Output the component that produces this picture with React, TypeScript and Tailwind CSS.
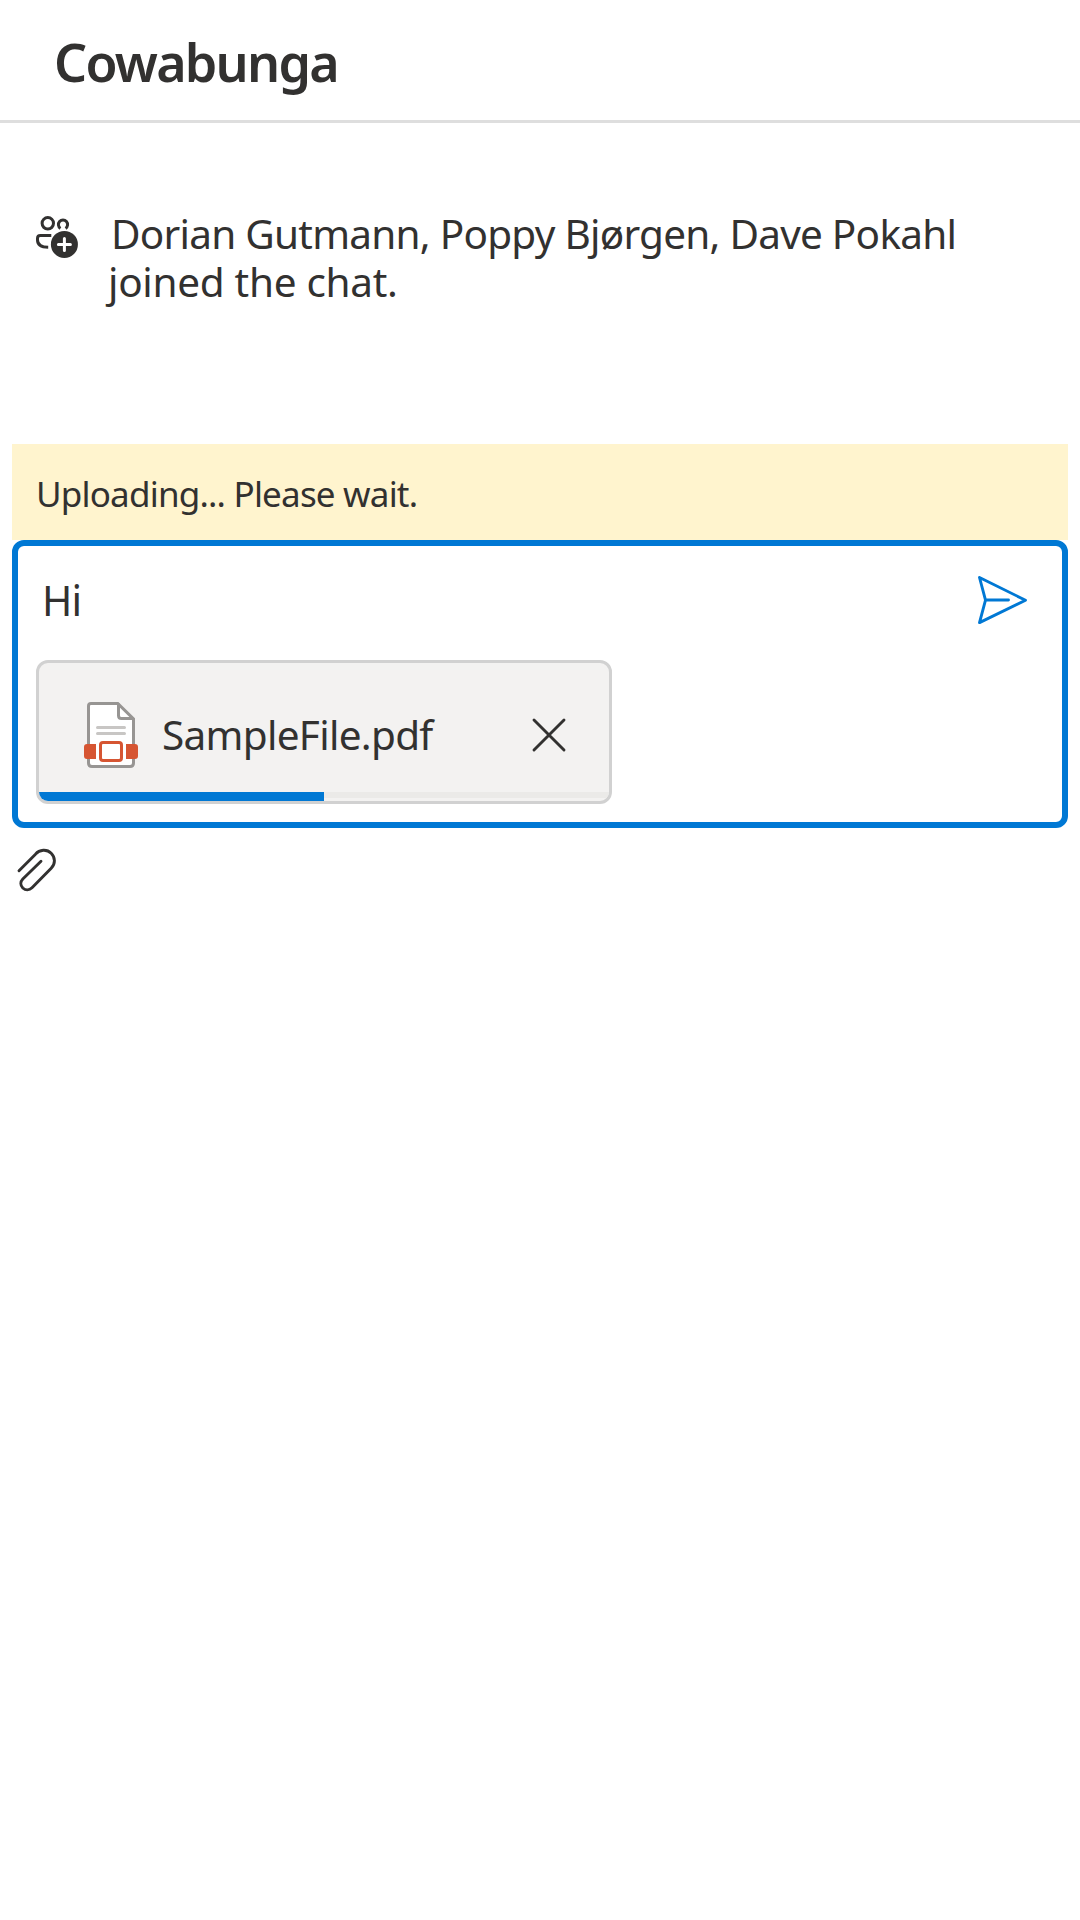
import React from "react";

function PeopleAddIcon() {
  return (
    <svg className="block shrink-0" width="48" height="48" viewBox="34 214 48 48" fill="none" stroke="#323130" strokeWidth="3">
      <circle cx="47.8" cy="223.3" r="5.7" />
      <path d="M60.4 228.4 A4.6 4.6 0 1 1 65.6 228.4" />
      <path d="M51.3 235.6 H40.4 Q37.5 235.6 37.5 238.5 V240 C37.5 244.8 41.5 247.2 48.2 247.3" />
      <circle cx="64.4" cy="244.4" r="13.5" fill="#323130" stroke="none" />
      <path d="M64.4 238.4 V250.4 M58.4 244.4 H70.4" stroke="#fff" strokeLinecap="round" />
    </svg>
  );
}

function FileIcon() {
  return (
    <svg className="block shrink-0" width="54" height="66" viewBox="84 702 54 66" fill="none">
      <path d="M91 703.5 H117.8 L133.5 719 V763 Q133.5 766.5 130 766.5 H92 Q88.5 766.5 88.5 763 V706 Q88.5 703.5 91 703.5 Z" fill="#fff" stroke="#979593" strokeWidth="3" />
      <path d="M118.5 703.5 V715.5 Q118.5 718.5 121.5 718.5 H133.5" stroke="#979593" strokeWidth="3" />
      <path d="M97.5 727.5 H124.5 M97.5 733.5 H124.5" stroke="#c8c6c4" strokeWidth="3" strokeLinecap="round" />
      <path d="M96 744 H87 Q84 744 84 747 V756 Q84 759 87 759 H96 Z M126 744 H135 Q138 744 138 747 V756 Q138 759 135 759 H126 Z" fill="#d65532" />
      <rect x="100.5" y="742.5" width="21" height="18" rx="2.5" fill="#fff" stroke="#d65532" strokeWidth="3" />
    </svg>
  );
}

function CloseIcon() {
  return (
    <svg className="block" width="36" height="36" viewBox="531 717 36 36" fill="none" stroke="#323130" strokeWidth="2.9" strokeLinecap="round">
      <path d="M534 720 L564 750 M564 720 L534 750" />
    </svg>
  );
}

function SendIcon() {
  return (
    <svg className="block" width="54" height="54" viewBox="975 573 54 54" fill="none" stroke="#0078d4" strokeWidth="2.9" strokeLinecap="round" strokeLinejoin="round">
      <path d="M979.5 577.5 L1025.5 600.2 L979.5 622.6 L985.5 600.2 Z M985.5 600 H1008.5" />
    </svg>
  );
}

function AttachIcon() {
  return (
    <svg className="block" width="42" height="48" viewBox="15 846 42 48" fill="none" stroke="#323130" strokeWidth="2.9" strokeLinecap="round" strokeLinejoin="round">
      <path d="M19 870.7 L35.5 854.2 C39.5 849.3 47 849 51.2 853.2 C55.5 857.5 55.5 863.8 51.2 868.3 L32 887.8 C29.3 890.5 25.5 890.5 22.8 888 C20.2 885.3 20.2 881.8 22.8 879 L41 861.3" />
    </svg>
  );
}

export default function App() {
  return (
    <div className="h-[1920px] w-[1080px] overflow-hidden bg-white font-['Noto_Sans',sans-serif] text-[#323130]">
      <header className="flex h-[123px] border-b-[3px] border-[#dedede] pl-[54px] pt-[26px]">
        <h1 className="whitespace-nowrap text-[52px] leading-[72px] font-semibold tracking-[-1.75px]">Cowabunga</h1>
      </header>
      <div className="flex h-[321px] pl-[34px] pt-[91px]">
        <PeopleAddIcon />
        <p className="ml-[26px] mt-[-4px] indent-[3px] text-[40.5px] leading-[48px] tracking-[-0.75px] whitespace-nowrap">
          Dorian Gutmann, Poppy Bjørgen, Dave Pokahl
          <br />
          <span className="tracking-[-0.3px]">joined the chat.</span>
        </p>
      </div>
      <main className="mx-3">
        <div className="flex h-24 items-center bg-[#fff4ce] pt-[5px] pl-6 text-[35px] tracking-[-0.8px] whitespace-nowrap">
          <span>Uploading... Please wait.</span>
        </div>
        <div className="h-72 rounded-xl border-6 border-[#0078d4]">
          <div className="flex h-[114px] items-start justify-between pl-6 pr-[33px]">
            <span className="mt-[26px] text-[41px] leading-[56px] tracking-[-1px]">Hi</span>
            <div className="mt-[27px]"><SendIcon /></div>
          </div>
          <div className="ml-[18px] flex h-36 w-[576px] flex-col overflow-hidden rounded-xl border-3 border-[#d1d1d1] bg-[#f3f2f1]">
            <div className="flex h-[129px] shrink-0 items-start pl-[45px]">
              <div className="mt-[39px]"><FileIcon /></div>
              <span className="mt-[44px] ml-6 w-[369px] text-[40.5px] leading-[56px] tracking-[-0.7px] whitespace-nowrap">SampleFile.pdf</span>
              <div className="mt-[54px]"><CloseIcon /></div>
            </div>
            <div className="h-1.5 shrink-0 bg-[#ebeae8]">
              <div className="h-[9px] w-[285px] bg-[#0078d4]" />
            </div>
          </div>
        </div>
        <div className="ml-[3px] mt-[18px]"><AttachIcon /></div>
      </main>
    </div>
  );
}
